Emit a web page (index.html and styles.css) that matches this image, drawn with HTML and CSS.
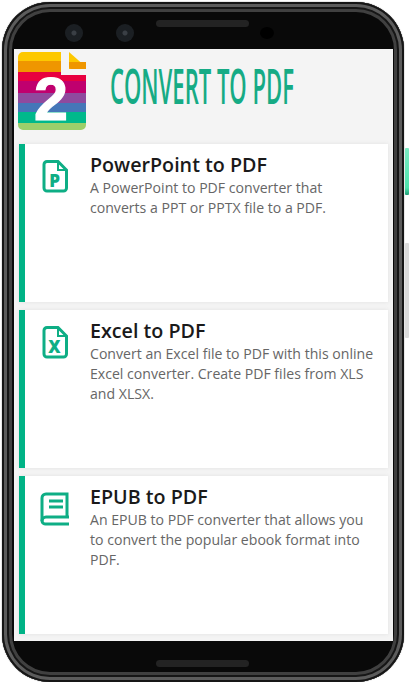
FILE: index.html
```html
<!DOCTYPE html>
<html lang="en">
<head>
    <meta charset="UTF-8">
    <meta name="viewport" content="width=device-width, initial-scale=1.0">
    <title>convert to pdf</title>
    <link rel="stylesheet" href="styles.css">
</head>
<body>
    <div class="phone">
        <span class="sidebutton power"></span>
        <span class="sidebutton volume"></span>
        <div class="bezeltop">
            <span class="camera"></span>
            <span class="camera second"></span>
            <span class="speaker"></span>
            <span class="sensor"></span>
        </div>
        <div class="screen">
            <div class="header">
                <svg class="logo" width="68" height="84" viewBox="0 0 68 84">
                    <defs>
                        <clipPath id="logoclip">
                            <path d="M5 0H43V23H68V73a5 5 0 0 1-5 5H5a5 5 0 0 1-5-5V5a5 5 0 0 1 5-5z"/>
                        </clipPath>
                    </defs>
                    <g clip-path="url(#logoclip)">
                        <rect width="68" height="9" fill="#fdc800"/>
                        <rect y="9" width="68" height="11" fill="#ef9600"/>
                        <rect y="20" width="68" height="9" fill="#e8003f"/>
                        <rect y="29" width="68" height="12" fill="#c0006e"/>
                        <rect y="41" width="68" height="10" fill="#8f4a9e"/>
                        <rect y="51" width="68" height="9" fill="#4576b8"/>
                        <rect y="60" width="68" height="11" fill="#00b98c"/>
                        <rect y="71" width="68" height="7" fill="#9ccf6b"/>
                    </g>
                    <path d="M51 0L68 15V17H51z" fill="#fdc800"/>
                    <path d="M51 10H68V17H53a2 2 0 0 1-2-2z" fill="#ef9600"/>
                    <text class="logonum" x="33" y="67.500" text-anchor="middle">2</text>
                </svg>
                <div class="title"><span>CONVERT TO PDF</span></div>
            </div>
            <div class="card">
                <svg class="icon" width="28" height="34" viewBox="0 0 28 34">
                    <path class="line" d="M6 2.500H17L25.500 11V29a3 3 0 0 1-3 3H6a3 3 0 0 1-3-3V5.500a3 3 0 0 1 3-3z"/>
                    <path class="line thin" d="M17 2.500V11H25.500"/>
                    <text class="iconletter" x="13.500" y="28" text-anchor="middle">P</text>
                </svg>
                <div class="cardtext">
                    <h2>PowerPoint to PDF</h2>
                    <p>A PowerPoint to PDF converter that converts a PPT or PPTX file to a PDF.</p>
                </div>
            </div>
            <div class="card">
                <svg class="icon" width="28" height="34" viewBox="0 0 28 34">
                    <path class="line" d="M6 2.500H17L25.500 11V29a3 3 0 0 1-3 3H6a3 3 0 0 1-3-3V5.500a3 3 0 0 1 3-3z"/>
                    <path class="line thin" d="M17 2.500V11H25.500"/>
                    <text class="iconletter" x="13.500" y="28" text-anchor="middle">X</text>
                </svg>
                <div class="cardtext">
                    <h2>Excel to PDF</h2>
                    <p>Convert an Excel file to PDF with this online Excel converter. Create PDF files from XLS and XLSX.</p>
                </div>
            </div>
            <div class="card">
                <svg class="icon book" width="30" height="34" viewBox="0 0 30 34">
                    <path class="line" d="M29 25H6a4 4 0 0 0-4 4 3.500 3.500 0 0 0 4 3H29"/>
                    <path class="line" d="M2 29V6a4 4 0 0 1 4-4H27V25"/>
                    <path class="line" d="M9 9H23M9 15H23"/>
                </svg>
                <div class="cardtext">
                    <h2>EPUB to PDF</h2>
                    <p>An EPUB to PDF converter that allows you to convert the popular ebook format into PDF.</p>
                </div>
            </div>
        </div>
        <div class="bezelbottom">
            <span class="speaker"></span>
        </div>
    </div>
</body>
</html>
```

FILE: styles.css
```css
body {
    margin: 0;
    background-color: white;
    font-family: "Open Sans", sans-serif;
}

.phone {
    position: relative;
    display: flex;
    flex-direction: column;
    box-sizing: border-box;
    width: 402px;
    height: 680px;
    margin: 2px 0 0 2px;
    padding: 0 11px 0 12px;
    background-color: #090909;
    border-radius: 48px;
    box-shadow: inset 0 0 0 2px #161616, inset 0 0 0 5px #5c5c5c, inset 0 0 0 7px #161616, inset 0 0 0 10px #404040, 0 0 0 1px #e8e8e8;
}

.sidebutton {
    position: absolute;
    left: 403px;
    width: 4px;
    border-radius: 1px;
}

.power {
    top: 146px;
    height: 47px;
    background: linear-gradient(#7cecc4, #4fe3ad 85%, #1f9f78);
}

.volume {
    top: 241px;
    height: 95px;
    background-color: #dcdcdc;
}

.bezeltop {
    display: flex;
    flex-shrink: 0;
    height: 47px;
    padding-left: 51px;
}

.camera {
    width: 18px;
    height: 18px;
    margin-top: 22px;
    margin-right: 33px;
    background: radial-gradient(circle, #3a3f45 0 2px, #1b1f23 3px);
    border-radius: 50%;
}

.camera.second {
    margin-right: 22px;
}

.speaker {
    display: block;
    width: 93px;
    height: 7px;
    background-color: #232323;
    border-radius: 4px;
}

.bezeltop .speaker {
    margin-top: 18px;
}

.sensor {
    width: 14px;
    height: 12px;
    margin-top: 25px;
    margin-left: 11px;
    background-color: #000;
    border-radius: 50%;
}

.screen {
    flex-grow: 1;
    min-height: 0;
    display: flex;
    flex-direction: column;
    gap: 8px;
    padding: 3px 5px 5px 5px;
    overflow: hidden;
    background-color: #f4f4f4;
}

.bezelbottom {
    flex-shrink: 0;
    height: 41px;
    padding: 19px 0 0 142px;
    box-sizing: border-box;
}

.header {
    display: flex;
    height: 84px;
    flex-shrink: 0;
}

.logo {
    flex-shrink: 0;
    margin-left: -1px;
}

.logonum {
    font-family: "Liberation Sans", sans-serif;
    font-size: 61px;
    font-weight: bold;
    fill: white;
    stroke: white;
    stroke-width: 1.2px;
}

.title {
    margin-left: 24px;
    padding-top: 3px;
    color: #16ab85;
    font-size: 49px;
    font-weight: 600;
    line-height: 60px;
    white-space: nowrap;
}

.title span {
    display: inline-block;
    transform: scaleX(0.45);
    transform-origin: left center;
}

.card {
    display: flex;
    flex-shrink: 0;
    box-sizing: border-box;
    height: 158px;
    padding: 10px 12px 0 16px;
    background-color: white;
    border-left: 6px solid #00b386;
    box-shadow: 0 0 4px #e2e2e2;
}

.icon {
    flex-shrink: 0;
    margin-top: 5px;
    margin-right: 21px;
}

.icon.book {
    margin-top: 6px;
    margin-left: -1px;
    margin-right: 20px;
}

.line {
    fill: none;
    stroke: #0eae85;
    stroke-width: 3;
}

.line.thin {
    stroke-width: 2;
}

.iconletter {
    font-family: "Open Sans", sans-serif;
    font-size: 17px;
    font-weight: 800;
    fill: #0eae85;
}

.cardtext h2 {
    margin: 0;
    color: #1a1a1a;
    font-size: 19.7px;
    font-weight: 600;
    line-height: 22px;
}

.cardtext p {
    margin: 2px 0 0 0;
    color: #666;
    font-size: 14.1px;
    line-height: 20px;
}
```
